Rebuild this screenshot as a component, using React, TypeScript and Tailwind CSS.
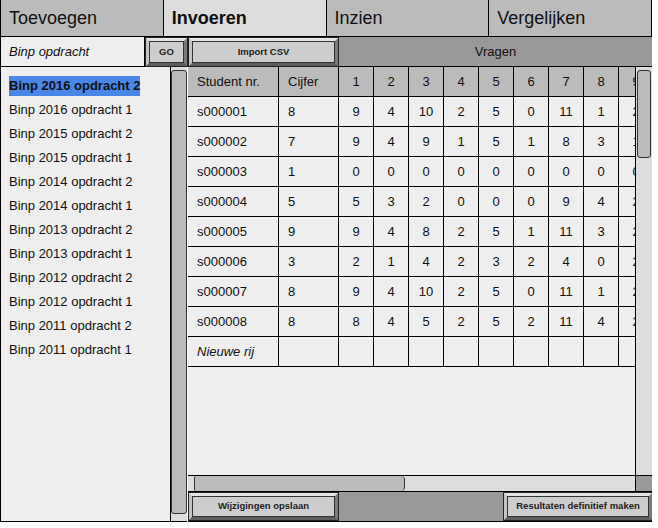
const tabs = [
  { label: 'Toevoegen', active: false },
  { label: 'Invoeren', active: true },
  { label: 'Inzien', active: false },
  { label: 'Vergelijken', active: false },
]

const opdrachten = [
  'Binp 2016 opdracht 2',
  'Binp 2016 opdracht 1',
  'Binp 2015 opdracht 2',
  'Binp 2015 opdracht 1',
  'Binp 2014 opdracht 2',
  'Binp 2014 opdracht 1',
  'Binp 2013 opdracht 2',
  'Binp 2013 opdracht 1',
  'Binp 2012 opdracht 2',
  'Binp 2012 opdracht 1',
  'Binp 2011 opdracht 2',
  'Binp 2011 opdracht 1',
]

const rows = [
  { nr: 's000001', cijfer: '8', scores: [9, 4, 10, 2, 5, 0, 11, 1, 2] },
  { nr: 's000002', cijfer: '7', scores: [9, 4, 9, 1, 5, 1, 8, 3, 1] },
  { nr: 's000003', cijfer: '1', scores: [0, 0, 0, 0, 0, 0, 0, 0, 0] },
  { nr: 's000004', cijfer: '5', scores: [5, 3, 2, 0, 0, 0, 9, 4, 2] },
  { nr: 's000005', cijfer: '9', scores: [9, 4, 8, 2, 5, 1, 11, 3, 2] },
  { nr: 's000006', cijfer: '3', scores: [2, 1, 4, 2, 3, 2, 4, 0, 2] },
  { nr: 's000007', cijfer: '8', scores: [9, 4, 10, 2, 5, 0, 11, 1, 2] },
  { nr: 's000008', cijfer: '8', scores: [8, 4, 5, 2, 5, 2, 11, 4, 2] },
]

const vragen = [1, 2, 3, 4, 5, 6, 7, 8, 9]

function Knop({ label, className }: { label: string; className: string }) {
  return (
    <div className={`border border-[#222] bg-[#999] ${className}`}>
      <div className="h-full border-[3px] border-t-[#e4e4e4] border-l-[#c4c4c4] border-b-[#5e5e5e] border-r-[#7a7a7a]">
        <div className="flex h-full items-center justify-center border border-[#333] bg-[#cdcdcd] text-[9.5px] font-bold text-[#222]">
          {label}
        </div>
      </div>
    </div>
  )
}

function Cel({ children, className }: { children?: React.ReactNode; className: string }) {
  return (
    <div className={`flex h-[30px] shrink-0 items-center border-r border-b border-black ${className}`}>
      {children}
    </div>
  )
}

export default function App() {
  return (
    <div className="h-[528px] w-[658px] bg-white font-['Liberation_Sans',Arial,sans-serif] text-[#111]">
      <div className="h-[522px] w-[652px] overflow-hidden border-l border-black">
        {/* tabs */}
        <div className="flex h-[37px]">
          {tabs.map((tab) => (
            <div
              key={tab.label}
              className={`flex w-[163px] items-center border-r border-b border-black pl-[8px] text-[18px] ${
                tab.active ? 'bg-[#dddddd] font-bold' : 'bg-[#bbbbbb]'
              }`}
            >
              {tab.label}
            </div>
          ))}
        </div>

        <div className="flex h-[485px]">
          {/* linker kolom */}
          <div className="flex w-[187px] flex-col">
            <div className="flex h-[30px]">
              <div className="flex w-[144px] items-center border-r border-b border-black bg-[#eeeeee] pl-[8px] text-[13px] italic">
                Binp opdracht
              </div>
              <Knop label="GO" className="w-[43px]" />
            </div>
            <div className="flex flex-1">
              <div className="flex w-[170px] flex-col border-r border-b border-black bg-[#eeeeee] pt-[7px]">
                {opdrachten.map((o, i) => (
                  <div key={o} className="flex h-[24px] items-center pl-[8px] text-[13px]">
                    <span className={i === 0 ? 'bg-[#4a86e8] font-bold' : ''}>{o}</span>
                  </div>
                ))}
              </div>
              <div className="flex w-[16px] flex-col border-b border-black bg-[#dddddd]">
                <div className="mt-[3px] mb-[7px] flex-1 rounded-[3px] border border-[#333] bg-[#bbbbbb]" />
              </div>
            </div>
          </div>

          {/* rechter kolom */}
          <div className="flex w-[465px] flex-col">
            <div className="flex h-[30px]">
              <Knop label="Import CSV" className="w-[151px]" />
              <div className="flex flex-1 items-center justify-center border-r border-b border-black bg-[#999999] text-[13px]">
                Vragen
              </div>
            </div>

            <div className="flex h-[408px]">
              <div className="w-[447px] overflow-hidden bg-[#eeeeee]">
                <div className="flex bg-[#bbbbbb]">
                  <Cel className="w-[91px] pl-[9px] text-[13px]">Student nr.</Cel>
                  <Cel className="w-[60px] pl-[9px] text-[13px]">Cijfer</Cel>
                  {vragen.map((v) => (
                    <Cel key={v} className="w-[35px] justify-center text-[13px]">
                      {v}
                    </Cel>
                  ))}
                </div>
                {rows.map((r) => (
                  <div key={r.nr} className="flex bg-[#eeeeee]">
                    <Cel className="w-[91px] pl-[9px] text-[13px]">{r.nr}</Cel>
                    <Cel className="w-[60px] pl-[9px] text-[13px]">{r.cijfer}</Cel>
                    {r.scores.map((s, i) => (
                      <Cel key={i} className="w-[35px] justify-center text-[13px]">
                        {s}
                      </Cel>
                    ))}
                  </div>
                ))}
                <div className="flex bg-[#eeeeee]">
                  <Cel className="w-[91px] pl-[9px] text-[13px] italic">Nieuwe rij</Cel>
                  <Cel className="w-[60px]" />
                  {vragen.map((v) => (
                    <Cel key={v} className="w-[35px]" />
                  ))}
                </div>
              </div>
              <div className="flex w-[18px] flex-col border-l border-r border-black bg-[#dddddd] px-px pt-[3px]">
                <div className="h-[88px] rounded-[3px] border border-[#333] bg-[#bbbbbb]" />
              </div>
            </div>

            <div className="flex h-[17px] border-t border-b border-black">
              <div className="flex w-[447px] bg-[#dddddd] pl-[6px]">
                <div className="w-[211px] rounded-r-[4px] rounded-l-[2px] border-x border-[#333] bg-[#bbbbbb]" />
              </div>
              <div className="w-[18px] border-l border-r border-black bg-[#999999]" />
            </div>

            <div className="flex h-[30px] border-b border-black bg-[#999999]">
              <Knop label="Wijzigingen opslaan" className="w-[151px]" />
              <div className="flex-1" />
              <Knop label="Resultaten definitief maken" className="w-[150px]" />
            </div>
          </div>
        </div>
      </div>
    </div>
  )
}
